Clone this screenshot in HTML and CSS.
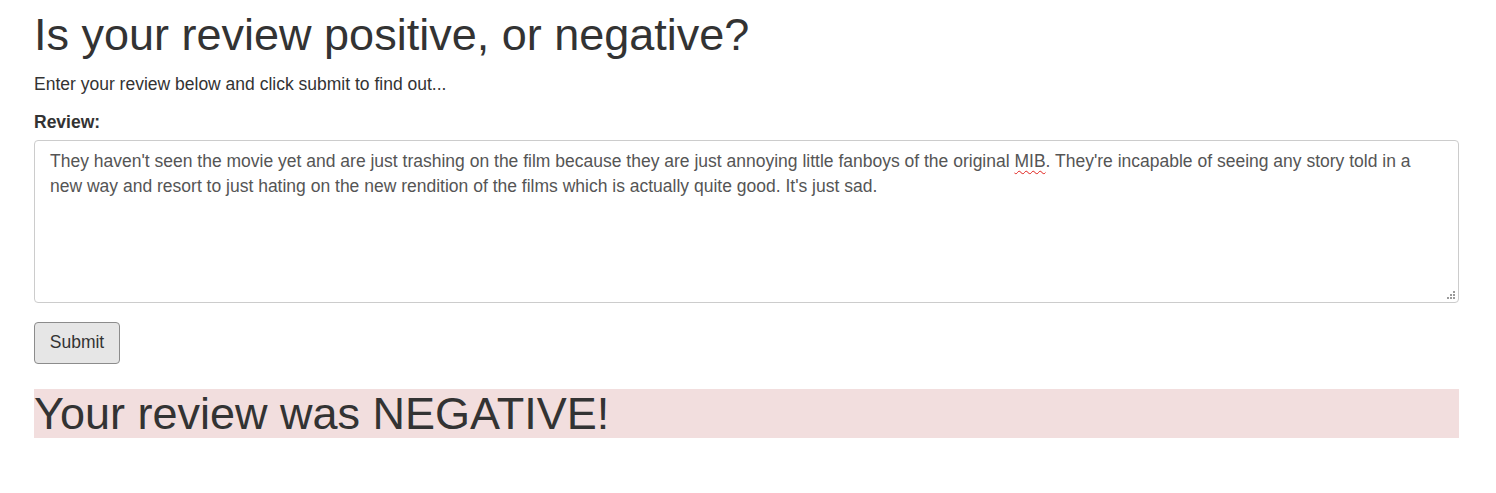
FILE: index.html
```html
<!DOCTYPE html>
<html>
<head>
<meta charset="utf-8">
<title>Review sentiment</title>
<link rel="stylesheet" href="styles.css">
</head>
<body>
<div class="page">
  <h1 class="title">Is your review positive, or negative?</h1>
  <p class="lead">Enter your review below and click submit to find out...</p>
  <form class="form">
    <label class="label">Review:</label>
    <div class="review" role="textbox" aria-multiline="true">They haven't seen the movie yet and are just trashing on the film because they are just annoying little fanboys of the original <span class="misspelt">MIB</span>. They're incapable of seeing any story told in a new way and resort to just hating on the new rendition of the films which is actually quite good. It's just sad.<svg class="grip" width="9" height="9" viewBox="0 0 9 9"><g fill="#9a9a9a"><rect x="7" y="1" width="2" height="2"/><rect x="4" y="4" width="2" height="2"/><rect x="7" y="4" width="2" height="2"/><rect x="1" y="7" width="2" height="2"/><rect x="4" y="7" width="2" height="2"/><rect x="7" y="7" width="2" height="2"/></g></svg></div>
    <div class="actions"><button type="button" class="btn">Submit</button></div>
  </form>
  <h2 class="result">Your review was NEGATIVE!</h2>
</div>
</body>
</html>
```
FILE: styles.css
```css
html, body { margin: 0; padding: 0; background: #fff; }
body { font-family: "Liberation Sans", Arial, sans-serif; color: #333; }
.page { padding: 0 37px 0 34px; }
.title { margin: 0 0 12.5px; padding-top: 10px; font-size: 45px; font-weight: 400; line-height: 49.5px; }
.lead { margin: 0 0 12.5px; font-size: 17.5px; line-height: 25px; }
.form { margin: 0; display: flex; flex-direction: column; }
.label { margin-bottom: 5px; font-size: 17.5px; font-weight: 700; line-height: 25px; }
.review {
  position: relative; box-sizing: border-box; width: 100%; height: 163px;
  border: 1px solid #ccc; border-radius: 4px; padding: 8px 15px;
  font-size: 17.5px; line-height: 25.5px; color: #555; background: #fff;
}
.misspelt { text-decoration: underline wavy #e0201b; text-decoration-thickness: 1px; text-underline-offset: 3px; }
.grip { position: absolute; right: 3px; bottom: 3px; }
.actions { margin-top: 19px; }
.btn {
  box-sizing: border-box; height: 42.5px; width: 86px; padding: 0;
  background: #e6e6e6; border: 1px solid #8c8c8c; border-radius: 4px;
  font-family: "Liberation Sans", Arial, sans-serif; font-size: 17.5px; color: #333;
}
.result { margin: 24.5px 0 0; background: #f2dede; font-size: 45px; font-weight: 400; line-height: 49.5px; }
```
